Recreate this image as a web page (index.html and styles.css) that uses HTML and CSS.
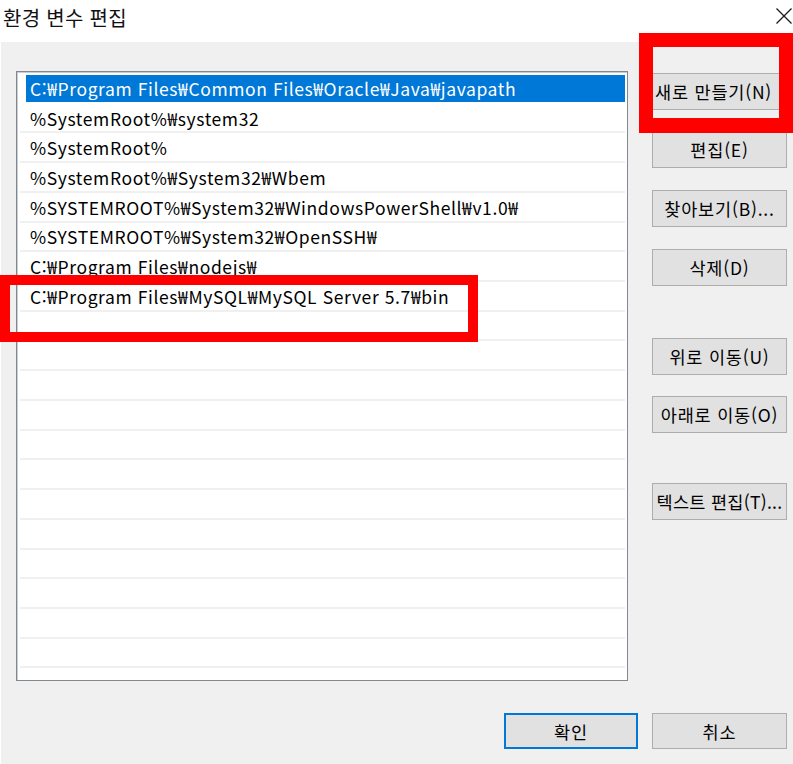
FILE: index.html
```html
<!DOCTYPE html>
<html lang="ko">
<head>
<meta charset="utf-8">
<link rel="stylesheet" href="styles.css">
</head>
<body>
<div class="dialog">
  <div class="titlebar">
    <span class="title">환경 변수 편집</span>
    <svg class="close" width="16" height="16" viewBox="0 0 16 16"><path d="M0.5 0.5 L15.5 15.5 M15.5 0.5 L0.5 15.5" stroke="#1a1a1a" stroke-width="1.3" fill="none"/></svg>
  </div>
  <div class="panel">
    <div class="main">
      <div class="list">
        <div class="row selected"><span class="txt">C:₩Program Files₩Common Files₩Oracle₩Java₩javapath</span></div>
        <div class="row"><span class="txt">%SystemRoot%₩system32</span></div>
        <div class="row"><span class="txt">%SystemRoot%</span></div>
        <div class="row"><span class="txt">%SystemRoot%₩System32₩Wbem</span></div>
        <div class="row"><span class="txt">%SYSTEMROOT%₩System32₩WindowsPowerShell₩v1.0₩</span></div>
        <div class="row"><span class="txt">%SYSTEMROOT%₩System32₩OpenSSH₩</span></div>
        <div class="row"><span class="txt">C:₩Program Files₩nodejs₩</span></div>
        <div class="row"><span class="txt">C:₩Program Files₩MySQL₩MySQL Server 5.7₩bin</span></div>
        <div class="row"></div>
        <div class="row"></div>
        <div class="row"></div>
        <div class="row"></div>
        <div class="row"></div>
        <div class="row"></div>
        <div class="row"></div>
        <div class="row"></div>
        <div class="row"></div>
        <div class="row"></div>
        <div class="row"></div>
        <div class="row"></div>
      </div>
      <div class="side">
        <button class="btn b-new">새로 만들기(N)</button>
        <button class="btn b-edit">편집(E)</button>
        <button class="btn b-browse">찾아보기(B)...</button>
        <button class="btn b-del">삭제(D)</button>
        <button class="btn b-up">위로 이동(U)</button>
        <button class="btn b-down">아래로 이동(O)</button>
        <button class="btn b-text">텍스트 편집(T)...</button>
      </div>
    </div>
    <div class="footer">
      <button class="btn ok">확인</button>
      <button class="btn">취소</button>
    </div>
  </div>
  <div class="mark mark-new"></div>
  <div class="mark mark-row"></div>
</div>
</body>
</html>
```
FILE: styles.css
```css
* { box-sizing: border-box; }
html, body { margin: 0; padding: 0; background: #ffffff; }
body {
  font-family: "Noto Sans CJK KR", "Noto Sans", sans-serif;
  color: #000;
}
.dialog {
  position: relative;
  width: 793px;
  height: 764px;
  overflow: hidden;
  display: flex;
  flex-direction: column;
}
.titlebar {
  height: 42px;
  display: flex;
  align-items: flex-start;
  justify-content: space-between;
  padding: 3px 1px 0 3px;
  background: #fff;
}
.title {
  font-size: 20px;
  line-height: 30px;
  letter-spacing: 0.3px;
  color: #111;
}
.close { margin-top: 5px; }
.panel {
  flex: 1;
  background: #f0f0f0;
  margin-left: 1px;
  padding: 29px 6px 0 15px;
  display: flex;
  flex-direction: column;
}
.main {
  display: flex;
  align-items: flex-start;
}
.list {
  width: 612px;
  height: 610px;
  background: #fff;
  border: 1px solid #828790;
  box-shadow: inset 1px 1px 0 #c9ccd1;
  padding: 2px 2px 0 3px;
  display: flex;
  flex-direction: column;
}
.row {
  height: 29.72px;
  flex: none;
  border-bottom: 2px solid #f0f0f0;
  display: flex;
  align-items: stretch;
  font-size: 17.5px;
  letter-spacing: 0.6px;
  white-space: nowrap;
}
.txt {
  display: flex;
  align-items: center;
  padding: 1px 0 0 10px;
  flex: 1;
}
.row.selected { border-bottom-color: #fff; padding: 1px 0 0 6px; }
.row.selected .txt {
  background: #0078d7;
  color: #fff;
  padding-left: 4px;
}
.side {
  margin-left: 24px;
  padding-top: 2px;
  display: flex;
  flex-direction: column;
}
.btn {
  width: 135px;
  height: 37px;
  background: #e1e1e1;
  border: 1px solid #adadad;
  font-family: "Noto Sans CJK KR", "Noto Sans", sans-serif;
  font-size: 17.5px;
  letter-spacing: 0.8px;
  color: #000;
  padding: 0;
  white-space: nowrap;
  overflow: hidden;
}
.b-new { padding-left: 2px; text-align: left; }
.b-edit { margin-top: 21px; }
.b-browse { margin-top: 22px; }
.b-del { margin-top: 22px; }
.b-up { margin-top: 52px; }
.b-down { margin-top: 21px; }
.b-text { margin-top: 50px; letter-spacing: 0.3px; }
.footer {
  margin-top: 32px;
  display: flex;
  justify-content: flex-end;
  gap: 14px;
}
.footer .btn { height: 36px; }
.btn.ok {
  width: 134px;
  border: 2px solid #0078d7;
}
.mark {
  position: absolute;
  border-style: solid;
  border-color: #ff0000;
}
.mark-new {
  left: 639px;
  top: 33px;
  width: 156px;
  height: 100px;
  border-width: 14px 16px 15px 14px;
}
.mark-row {
  left: 0;
  top: 275px;
  width: 478px;
  height: 67px;
  border-width: 10px;
}
```
